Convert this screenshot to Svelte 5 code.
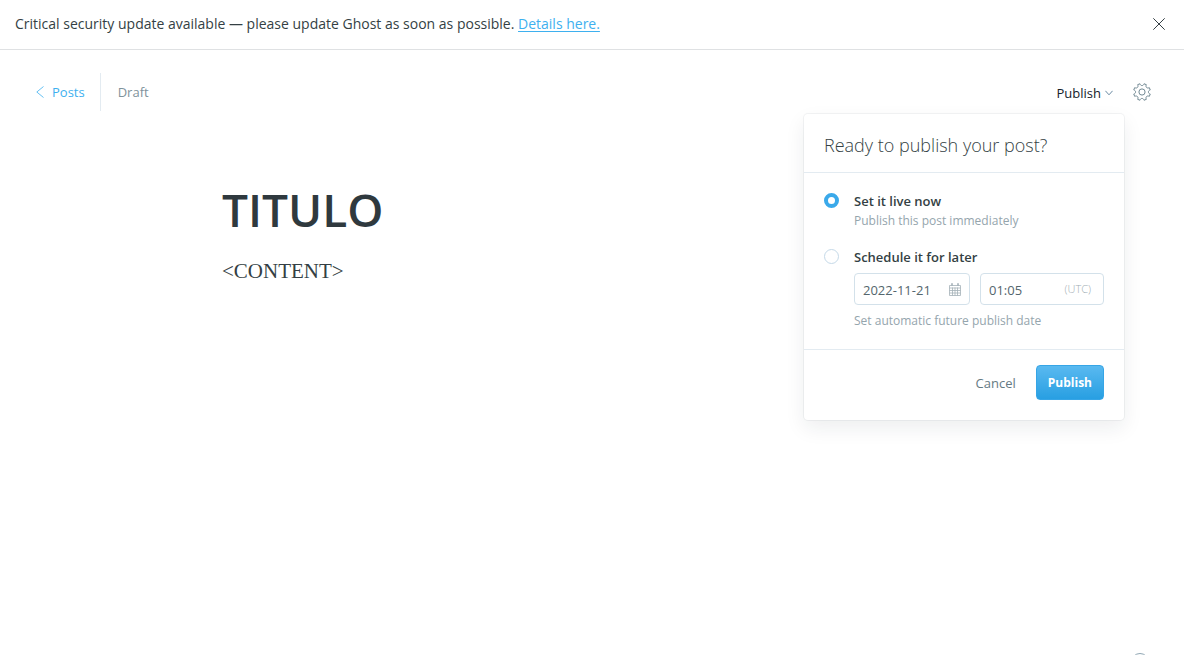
<script>
  let choice = $state('now');
  let date = $state('2022-11-21');
  let time = $state('01:05');
  let menuOpen = $state(true);
  let alertOpen = $state(true);
</script>

<div class="page">
  {#if alertOpen}
    <aside class="alert">
      <p>Critical security update available — please update Ghost as soon as possible. <a href="#details">Details here.</a></p>
      <button class="icon-button" aria-label="Close" onclick={() => (alertOpen = false)}>
        <svg width="12" height="12" viewBox="0 0 12 12"><path d="M.3.3l11.4 11.4M11.7.3L.3 11.7" /></svg>
      </button>
    </aside>
  {/if}

  <header class="toolbar">
    <a class="back" href="#posts">
      <svg width="8" height="12" viewBox="0 0 8 12"><path d="M7.5.5L.8 6l6.7 5.5" /></svg>
      Posts
    </a>
    <span class="status">Draft</span>

    <div class="actions">
      <div class="publish">
        <button class="trigger" aria-expanded={menuOpen} onclick={() => (menuOpen = !menuOpen)}>
          Publish
          <svg width="8" height="6" viewBox="0 0 8 6"><path d="M.4.8L4 4.8 7.6.8" /></svg>
        </button>

        {#if menuOpen}
          <form class="menu" onsubmit={(e) => e.preventDefault()}>
            <h2>Ready to publish your post?</h2>
            <div class="options">
              <div class="option">
                <input type="radio" id="now" name="when" value="now" bind:group={choice} />
                <div class="detail">
                  <label for="now">Set it live now</label>
                  <p>Publish this post immediately</p>
                </div>
              </div>
              <div class="option">
                <input type="radio" id="later" name="when" value="later" bind:group={choice} />
                <div class="detail">
                  <label for="later">Schedule it for later</label>
                  <div class="fields">
                    <div class="field date">
                      <input type="text" aria-label="Publish date" bind:value={date} />
                      <svg width="12" height="13" viewBox="0 0 12 13">
                        <path d="M.5 2.5h11v10H.5zM.5 5h11M.5 7.5h11M.5 10h11M3.5 4.5v8M6 4.5v8M8.5 4.5v8M2.5.5h1v2h-1zM8.5.5h1v2h-1z" />
                      </svg>
                    </div>
                    <div class="field time">
                      <input type="text" aria-label="Publish time" bind:value={time} />
                      <span>(UTC)</span>
                    </div>
                  </div>
                  <p>Set automatic future publish date</p>
                </div>
              </div>
            </div>
            <footer>
              <button type="button" class="cancel" onclick={() => (menuOpen = false)}>Cancel</button>
              <button type="submit" class="primary">Publish</button>
            </footer>
          </form>
        {/if}
      </div>

      <button class="icon-button gear" aria-label="Settings">
        <svg width="18" height="18" viewBox="0 0 18 18">
          <circle cx="9" cy="9" r="3.1" />
          <path d="M6.94.75C7.6 3.2 10.4 3.2 11.06.75L13.38 1.71C12.11 3.9 14.1 5.89 16.29 4.62L17.25 6.94C14.8 7.6 14.8 10.4 17.25 11.06L16.29 13.38C14.1 12.11 12.11 14.1 13.38 16.29L11.06 17.25C10.4 14.8 7.6 14.8 6.94 17.25L4.62 16.29C5.89 14.1 3.9 12.11 1.71 13.38L.75 11.06C3.2 10.4 3.2 7.6.75 6.94L1.71 4.62C3.9 5.89 5.89 3.9 4.62 1.71Z" />
        </svg>
      </button>
    </div>
  </header>

  <main>
    <h1>TITULO</h1>
    <p>&lt;CONTENT&gt;</p>
  </main>

  <button class="help" aria-label="Help">
    <svg width="18" height="18" viewBox="0 0 18 18"><circle cx="9" cy="9" r="8.5" /></svg>
  </button>
</div>

<style>
  :global(body) {
    margin: 0;
    background: #fff;
  }

  .page {
    position: relative;
    min-height: 100vh;
    overflow: hidden;
    color: #343f44;
    font: 13px/20px "Open Sans", "Noto Sans", sans-serif;
  }

  button,
  input {
    font: inherit;
    color: inherit;
  }

  button {
    padding: 0;
    border: 0;
    background: none;
    cursor: pointer;
  }

  p {
    margin: 0;
  }

  svg {
    display: block;
    fill: none;
    stroke: currentColor;
    stroke-linejoin: round;
  }

  .alert {
    display: flex;
    align-items: center;
    justify-content: space-between;
    padding: 14px 19px 15px 15px;
    border-bottom: 1px solid #dfe1e3;
  }

  .alert p {
    font-size: 14px;
  }

  .alert a {
    color: #3eb0ef;
    text-underline-offset: 2px;
  }

  .toolbar {
    display: flex;
    align-items: center;
    height: 38px;
    padding: 23px 33px 0 36px;
  }

  .back {
    display: flex;
    align-items: center;
    gap: 8px;
    height: 38px;
    padding-right: 15px;
    border-right: 1px solid #e3ebf1;
    color: #3eb0ef;
    text-decoration: none;
  }

  .back svg {
    stroke-width: 0.8;
  }

  .status {
    padding-left: 17px;
    color: #7f929b;
  }

  .actions {
    display: flex;
    align-items: center;
    gap: 20px;
    margin-left: auto;
  }

  .publish {
    position: relative;
  }

  .trigger {
    display: flex;
    align-items: center;
    gap: 4px;
    padding-top: 2px;
    color: #15212a;
  }

  .trigger svg {
    color: #6a8aa3;
  }

  .gear {
    color: #738a94;
  }

  .menu {
    position: absolute;
    top: 33px;
    right: -11px;
    z-index: 1;
    width: 320px;
    border-radius: 4px;
    background: #fff;
    box-shadow: 0 0 0 1px rgba(99, 114, 130, 0.08), 0 8px 20px rgba(27, 39, 51, 0.08);
  }

  h2 {
    margin: 0;
    padding: 19px 20px 15px;
    border-bottom: 1px solid #e3ebf1;
    font-size: 18px;
    line-height: 24px;
    font-weight: 300;
  }

  .options {
    display: grid;
    gap: 16px;
    padding: 18px 20px;
  }

  .option {
    display: flex;
    gap: 15px;
  }

  .option > input {
    flex: none;
    appearance: none;
    box-sizing: border-box;
    width: 15px;
    height: 15px;
    margin: 2px 0 0;
    border: 1px solid #c5d9e8;
    border-radius: 50%;
    background: #fff;
  }

  .option > input:checked {
    border: 4px solid #3aa9ea;
  }

  .detail {
    flex: 1;
  }

  label {
    display: block;
    font-weight: 600;
  }

  .detail p {
    color: #95a5ad;
    font-size: 12px;
  }

  .fields {
    display: flex;
    gap: 10px;
    padding: 6px 0;
  }

  .field {
    display: flex;
    align-items: center;
    box-sizing: border-box;
    height: 32px;
    padding: 0 8px;
    border: 1px solid #d3e1ea;
    border-radius: 4px;
    color: #54666d;
  }

  .date {
    flex: 98;
  }

  .time {
    flex: 102;
    padding-right: 12px;
  }

  .field input {
    flex: 1;
    width: 0;
    min-width: 0;
    padding: 2px 0 0;
    border: 0;
    outline: 0;
    background: none;
  }

  .field svg {
    color: #a5b1b8;
    stroke-width: 0.8;
  }

  .field span {
    color: #9fadb4;
    font-size: 11px;
    font-weight: 300;
  }

  footer {
    display: flex;
    align-items: center;
    justify-content: flex-end;
    gap: 20px;
    padding: 15px 20px 20px;
    border-top: 1px solid #e3ebf1;
  }

  .cancel {
    color: #657a83;
  }

  .primary {
    height: 35px;
    padding: 0 11px;
    border: 1px solid #36a5e6;
    border-radius: 4px;
    background: linear-gradient(#59b9f0, #289fe2);
    color: #fff;
    font-size: 12px;
    font-weight: 700;
  }

  main {
    padding: 66px 222px 0;
  }

  h1 {
    margin: 0;
    color: #2f393e;
    font-size: 46px;
    line-height: 64px;
    font-weight: 600;
  }

  main p {
    padding-top: 14px;
    font: 21px/32px "Liberation Serif", serif;
  }

  .help {
    position: absolute;
    right: 35px;
    bottom: -16px;
    color: #8fa6b3;
  }
</style>
